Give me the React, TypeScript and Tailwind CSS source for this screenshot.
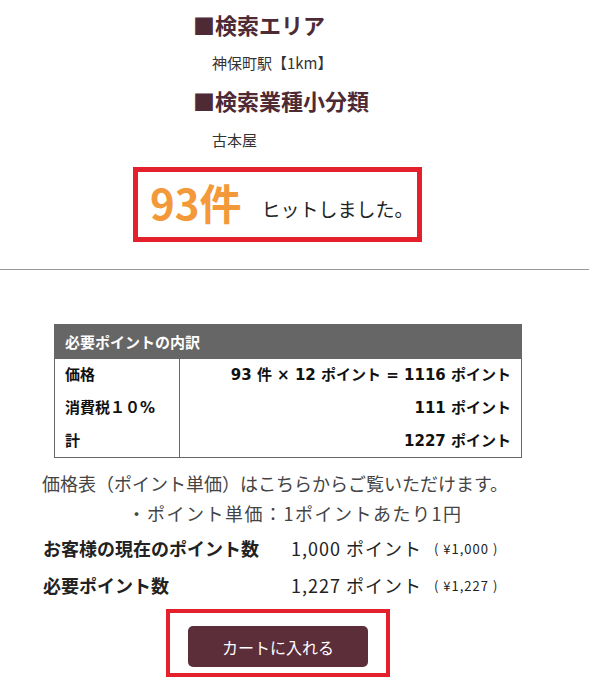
const jp = "font-['Noto_Sans_CJK_JP','Noto_Sans',sans-serif]";
const verdana = "font-['DejaVu_Sans','Noto_Sans_CJK_JP',sans-serif]";

const rows = [
  { label: "価格", value: "93 件 × 12 ポイント = 1116 ポイント" },
  { label: "消費税１０%", value: "111 ポイント" },
  { label: "計", value: "1227 ポイント" },
];

export default function App() {
  return (
    <div className={`w-[589px] h-[679px] overflow-hidden bg-white text-[#333] ${jp}`}>
      <div className="pl-[193px] pt-[9px]">
        <h2 className="text-[22px] font-bold leading-[30px] text-[#4e2a35]">■検索エリア</h2>
        <p className="mt-[14px] pl-[19px] text-[15px] leading-[20px]">神保町駅【1km】</p>
        <h2 className="mt-[12px] text-[22px] font-bold leading-[30px] text-[#4e2a35]">■検索業種小分類</h2>
        <p className="mt-[15px] pl-[19px] text-[15px] leading-[20px]">古本屋</p>
      </div>

      <div className="ml-[133px] mt-[17px] flex h-[75px] w-[289px] items-center whitespace-nowrap border-[5px] border-[#e3202b] pl-[12px]">
        <span className="mt-[-6px] shrink-0 text-[42px] font-bold leading-none text-[#f3993a]">93件</span>
        <span className="ml-[20px] mt-[8px] shrink-0 text-[19px] leading-none text-[#222]">ヒットしました。</span>
      </div>

      <hr className="mt-[27px] border-0 border-t border-[#999]" />

      <table className={`ml-[54px] mt-[54px] w-[468px] border-collapse border border-[#666] text-[15px] font-bold text-[#111] ${verdana}`}>
        <thead>
          <tr className="h-[34px] bg-[#666]">
            <th colSpan={2} className={`pl-[10px] text-left text-[15px] text-white ${jp}`}>必要ポイントの内訳</th>
          </tr>
        </thead>
        <tbody>
          {rows.map((row) => (
            <tr key={row.label} className="h-[33px]">
              <td className="w-[125px] border-r border-[#666] pl-[10px]">{row.label}</td>
              <td className="pr-[10px] text-right">{row.value}</td>
            </tr>
          ))}
        </tbody>
      </table>

      <div className="w-[550px] text-center text-[18px] leading-[30px] text-[#444]">
        <p className="mt-[10px]">価格表（ポイント単価）はこちらからご覧いただけます。</p>
        <p className="pl-[40px] tracking-[1.5px]">・ポイント単価：1ポイントあたり1円</p>
      </div>

      <div className="ml-[43px] mt-[2px] text-[18px] text-[#222]">
        <div className="flex h-[37px] items-center">
          <span className="w-[248px] font-bold">お客様の現在のポイント数</span>
          <span className="tracking-[1px]">1,000 ポイント</span>
          <span className="ml-[12px] text-[13px] tracking-[1px]">( ¥1,000 )</span>
        </div>
        <div className="flex h-[37px] items-center">
          <span className="w-[248px] font-bold">必要ポイント数</span>
          <span className="tracking-[1px]">1,227 ポイント</span>
          <span className="ml-[12px] text-[13px] tracking-[1px]">( ¥1,227 )</span>
        </div>
      </div>

      <div className="ml-[166px] mt-[5px] flex h-[68px] w-[224px] justify-center border-[4px] border-[#e3202b] pt-[13px]">
        <button className="h-[41px] w-[180px] rounded-[5px] bg-[#5b2e3a] text-[16px] text-white">カートに入れる</button>
      </div>
    </div>
  );
}
